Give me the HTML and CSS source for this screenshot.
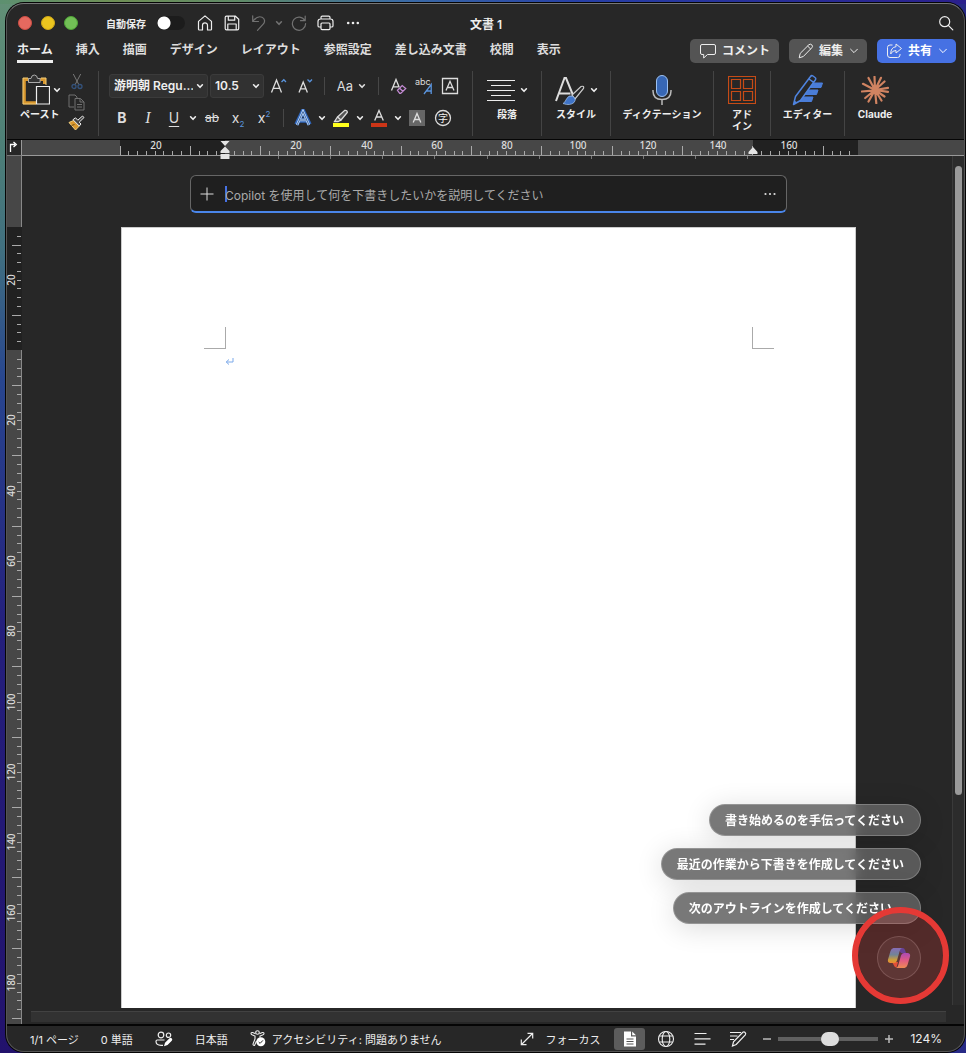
FILE: index.html
```html
<!DOCTYPE html>
<html lang="ja">
<head>
<meta charset="utf-8">
<meta name="viewport" content="width=device-width, initial-scale=1">
<title>文書 1</title>
<link rel="stylesheet" href="styles.css">
</head>
<body>
<svg class="defs" aria-hidden="true">
  <symbol id="chev" viewBox="0 0 8 8"><path d="M1.6 2.8 4 5.3 6.4 2.8" fill="none" stroke="currentColor" stroke-width="1.6" stroke-linecap="round" stroke-linejoin="round"/></symbol>
  <symbol id="chev-thin" viewBox="0 0 8 8"><path d="M.6 2.2 4 5.6 7.4 2.2" fill="none" stroke="currentColor" stroke-linecap="round" stroke-linejoin="round"/></symbol>
</svg>
<div class="window">
  <header class="titlebar">
    <div class="title-left">
      <div class="lights">
        <button class="light red" aria-label="閉じる"></button>
        <button class="light yellow" aria-label="しまう"></button>
        <button class="light green" aria-label="拡大"></button>
      </div>
      <label class="autosave">自動保存<input type="checkbox" class="switch"></label>
      <div class="quick">
        <button class="qa" aria-label="ホーム"><svg width="16" height="16" viewBox="0 0 16 16"><path d="M1.5 6.4 8 .9l6.500 5.500V14.200q0 .8-.8.8H10.500V10.300a2.500 2.500 0 0 0-5 0V15H2.300q-.8 0-.8-.8z"/></svg></button>
        <button class="qa" aria-label="保存"><svg width="16" height="16" viewBox="0 0 16 16"><path d="M2.500 1.200h9l3.200 3V13.500q0 1.300-1.300 1.300H2.500q-1.300 0-1.300-1.300V2.500q0-1.300 1.300-1.300zM4.300 1.200v4h6.400v-4M3.800 14.800V9h8.400v5.800"/></svg></button>
        <button class="qa dim" aria-label="元に戻す"><svg width="16" height="16" viewBox="0 0 16 16"><path d="M1.700.8V6.500H7.500M2 6.200C4.500 2.800 8 1 11 2.200c3 1.300 3.300 4.800 1.200 7L6.500 15.300"/></svg></button>
        <button class="qa-chev dim" aria-label="元に戻すの履歴"><svg width="8" height="8"><use href="#chev"/></svg></button>
        <button class="qa dim" aria-label="やり直し"><svg width="16" height="16" viewBox="0 0 16 16"><path d="M14.200 1v4.700H9.500M13.800 5.500A6.600 6.600 0 1 0 14.600 8.500"/></svg></button>
        <button class="qa" aria-label="印刷"><svg width="17" height="16" viewBox="0 0 17 16"><path d="M4 4V2.500Q4 1.200 5.300 1.200h6.400Q13 1.200 13 2.500V4M4 12H2.300Q1 12 1 10.700V6.500Q1 4 3.500 4h10Q16 4 16 6.500v4.200Q16 12 14.700 12H13M5 8h7q1 0 1 1v4.600q0 1-1 1H5q-1 0-1-1V9q0-1 1-1z"/></svg></button>
        <button class="qa" aria-label="その他"><svg width="16" height="16" viewBox="0 0 16 16"><g fill="currentColor" stroke="none"><circle cx="3.200" cy="8" r="1.300"/><circle cx="8" cy="8" r="1.300"/><circle cx="12.800" cy="8" r="1.300"/></g></svg></button>
      </div>
    </div>
    <h1 class="doc-title">文書 1</h1>
    <div class="title-right">
      <button class="qa" aria-label="検索"><svg width="16" height="16" viewBox="0 0 16 16"><circle cx="6.700" cy="6.700" r="5"/><path d="m10.300 10.300 4.500 4.500"/></svg></button>
    </div>
  </header>

  <div class="tabrow">
    <nav class="tabs">
      <a class="tab active" href="#home">ホーム</a>
      <a class="tab" href="#insert">挿入</a>
      <a class="tab" href="#draw">描画</a>
      <a class="tab" href="#design">デザイン</a>
      <a class="tab" href="#layout">レイアウト</a>
      <a class="tab" href="#references">参照設定</a>
      <a class="tab" href="#mailings">差し込み文書</a>
      <a class="tab" href="#review">校閲</a>
      <a class="tab" href="#view">表示</a>
    </nav>
    <div class="actions">
      <button class="action"><svg width="18" height="16" viewBox="0 0 18 16"><path d="M3 1.500h12q1.500 0 1.500 1.500v7q0 1.500-1.500 1.500H8.500L4.700 15v-3.500H3Q1.500 11.500 1.500 10V3Q1.500 1.500 3 1.500z"/></svg>コメント</button>
      <button class="action"><svg width="16" height="16" viewBox="0 0 16 16"><path d="m1.200 14.800 1-4.400 8.600-8.600q1.500-1.300 3 0 1.400 1.500 0 3L5.300 13.500zM9.600 3l3.200 3.200"/></svg>編集<svg class="drop" width="8" height="8"><use href="#chev-thin"/></svg></button>
      <button class="action primary"><svg width="17" height="16" viewBox="0 0 17 16"><path d="M6.500 2H4Q1.500 2 1.500 4.500V12Q1.500 14.500 4 14.500h7.500Q14 14.500 14 12V11M10 1l5.500 4.500L10 10V7.500Q6.500 7.300 4.700 11 4.700 4.300 10 3.700z"/></svg>共有<svg class="drop" width="8" height="8"><use href="#chev-thin"/></svg></button>
    </div>
  </div>

  <div class="ribbon">
    <section class="group clip">
      <button class="big">
        <span class="big-icon"><svg width="28" height="32" viewBox="0 0 28 32"><path d="M7 5.500H2.300V28.700H14M18 5.500h4.500V10" fill="none" stroke="#d9982f" stroke-width="3"/><path d="M1 4h5M1 4v26h13M24 4h-5M24 4v7" fill="none" stroke="#f3cd78"/><path d="M6.500 8.500v-4H9Q9.500 1 12.300 1T15.600 4.500h2.500v4z" fill="#333" stroke="#aaa"/><path d="M14.500 12.500h13v17.500h-13z" fill="#272727" stroke="#eee" stroke-width="1.200"/></svg><svg width="8" height="8"><use href="#chev"/></svg></span>
        <span>ペースト</span>
      </button>
      <div class="clip-tools">
        <button aria-label="切り取り"><svg width="12" height="17" viewBox="0 0 12 17"><path d="m2.300 1 5.500 10.500M9.700 1 4.200 11.500" fill="none" stroke="#777"/><g fill="none" stroke="#34527b" stroke-width="1.300"><circle cx="3" cy="13.500" r="2"/><circle cx="9" cy="13.500" r="2"/></g></svg></button>
        <button aria-label="コピー"><svg width="17" height="17" viewBox="0 0 17 17"><path d="M6 13H1V1h6l2 2v1M7 4.500h5.500L16 8v8H7zM12 4.500V8h4M9 10.500h5M9 13h5" fill="none" stroke="#717171"/></svg></button>
        <button aria-label="書式のコピー"><svg width="17" height="16" viewBox="0 0 17 16"><path d="M1 7.500 7.500 15l3.800-4L5.500 5.500z" fill="#d9982f" stroke="#f2cf7e"/><path d="m3.500 10.500 3-1" stroke="#725017"/><path d="m5 4.700 6.300 6.300 1.700-2-1.800-1.800L16 2.500 14.500 1 9.800 5.200 7.500 2.800z" fill="#444" stroke="#eee"/></svg></button>
      </div>
    </section>

    <section class="group font-group">
      <div class="row">
        <span class="pick name"><select aria-label="フォント"><option>游明朝 Regu...</option></select><svg width="8" height="8"><use href="#chev"/></svg></span>
        <span class="pick size"><select aria-label="フォント サイズ"><option>10.5</option></select><svg width="8" height="8"><use href="#chev"/></svg></span>
        <button class="tool" aria-label="フォントの拡大"><svg width="18" height="18" viewBox="0 0 18 18"><path d="M1.500 15.500 6.500 3l5 12.500M3.200 11.300h6.600"/><path class="blue" d="m11.500 5 2.300-2.300L16 5"/></svg></button>
        <button class="tool" aria-label="フォントの縮小"><svg width="18" height="18" viewBox="0 0 18 18"><path d="M3 15.500 7.200 5l4.200 10.500M4.500 11.800h5.400"/><path class="blue" d="m11.500 2.500 2.300 2.300L16 2.500"/></svg></button>
        <i class="rule"></i>
        <button class="tool case">Aa<svg width="8" height="8"><use href="#chev"/></svg></button>
        <i class="rule"></i>
        <button class="tool" aria-label="書式のクリア"><svg width="18" height="18" viewBox="0 0 18 18"><path d="M2.500 13.500 7 2.500l3.200 7.800M4 9.800h5.500"/><path d="m8.500 13.300 4.700-4.700 3.500 3-5 4.700h-1zM10.600 11.200l3.300 3" stroke="#c48bd4"/></svg></button>
        <button class="tool" aria-label="ルビ"><svg width="18" height="18" viewBox="0 0 18 18"><text x="0" y="8" class="ruby">abc</text><path class="blue" d="M9 17 16.200 7.500V17M11.200 14h5"/></svg></button>
        <button class="tool" aria-label="囲み線"><svg width="18" height="18" viewBox="0 0 18 18"><path d="M1.500 1.500h15v15h-15zM5 13.500 9 4.300l4 9.200M6.400 10.500h5.200"/></svg></button>
      </div>
      <div class="row">
        <button class="tool letter bold">B</button>
        <button class="tool letter italic">I</button>
        <button class="tool letter under">U</button>
        <button class="mini" aria-label="下線の種類"><svg width="8" height="8"><use href="#chev"/></svg></button>
        <button class="tool letter strike">ab</button>
        <button class="tool letter"><span>x<sub>2</sub></span></button>
        <button class="tool letter"><span>x<sup>2</sup></span></button>
        <i class="rule wide"></i>
        <button class="tool" aria-label="文字の効果"><svg width="18" height="18" viewBox="0 0 18 18"><path d="M2.500 15.500 9 2l6.500 13.500M5 11.500h8" stroke="#2f64b8" stroke-width="4.500"/><path d="M3 16 9 2.500l6 13.500M5.500 11h7" stroke="#bfdcff" stroke-width="2.400"/><path d="M3 16 9 2.500l6 13.500M5.500 11h7" stroke="#2b4d80" stroke-width=".8"/></svg></button>
        <button class="mini" aria-label="効果の一覧"><svg width="8" height="8"><use href="#chev"/></svg></button>
        <button class="tool" aria-label="蛍光ペン"><svg width="18" height="18" viewBox="0 0 18 18"><path d="m5.500 8 7-6.500q3-.5 2.800 2L9 11zM5.500 8 9 11l-3 1.500H2.500z" fill="#555"/><path d="M1 14h16v4H1z" fill="#ffff1c" stroke="none"/></svg></button>
        <button class="mini" aria-label="蛍光ペンの色"><svg width="8" height="8"><use href="#chev"/></svg></button>
        <button class="tool" aria-label="フォントの色"><svg width="18" height="18" viewBox="0 0 18 18"><path d="m4.700 11.500 4.300-10 4.300 10M6.300 8h5.400"/><path d="M1 14h16v4H1z" fill="#cc3517" stroke="none"/></svg></button>
        <button class="mini" aria-label="フォントの色の一覧"><svg width="8" height="8"><use href="#chev"/></svg></button>
        <button class="tool" aria-label="文字の網かけ"><svg width="18" height="18" viewBox="0 0 18 18"><path d="M1 1h16v16H1z" fill="#666" stroke="none"/><path d="M5.200 13.500 9 4.500l3.800 9M6.500 10.500h5"/></svg></button>
        <button class="tool" aria-label="囲い文字"><svg width="18" height="18" viewBox="0 0 18 18"><circle cx="9" cy="9" r="7.500"/><text x="4" y="13" class="enclosed">字</text></svg></button>
      </div>
    </section>

    <section class="group medium">
      <button class="big"><span class="big-icon"><svg width="28" height="28" viewBox="0 0 28 28"><path d="M0 4.500h28M4 9.500h20M0 14.500h28M4 19.500h20M0 24.500h28" fill="none" stroke="#ececec" stroke-width="1.200"/></svg><svg width="8" height="8"><use href="#chev"/></svg></span><span>段落</span></button>
    </section>
    <section class="group medium">
      <button class="big"><span class="big-icon"><svg width="30" height="30" viewBox="0 0 30 30"><path d="M1 26 9.500 3h1.500L18 20M4.500 18.500h11" fill="none" stroke="#ddd" stroke-width="2"/><path d="m17 20 9-8.500q3.500-1 2.500 2L20 24z" fill="#272727" stroke="#ccc" stroke-width="1.200"/><path d="M8 28.500q2-1 3.500-4.500 2-4.300 6-2.800 4.500 2.500 1.500 6.300-4 3.500-11 1z" fill="#3f74c8" stroke="#a9c7ee" stroke-width=".7"/></svg><svg width="8" height="8"><use href="#chev"/></svg></span><span>スタイル</span></button>
    </section>
    <section class="group large">
      <button class="big"><span class="big-icon"><svg width="20" height="32" viewBox="0 0 20 32"><rect x="4.500" y="1.500" width="11" height="21" rx="5.500" fill="#3767b5" stroke="#9cc1f2"/><path d="M1 16v1q0 8.500 9 8.500t9-8.500v-1M10 25.500V31" fill="none" stroke="#bbb" stroke-width="1.500"/></svg></span><span>ディクテーション</span></button>
    </section>
    <section class="group small">
      <button class="big"><span class="big-icon"><svg width="28" height="28" viewBox="0 0 28 28"><path d="M.5.500h27v27H.5zM3.500 3.500h9v9h-9zM15.500 3.500h9v9h-9zM3.500 15.500h9v9h-9zM15.500 15.500h9v9h-9z" fill="none" stroke="#c64b16" stroke-width="1.200"/></svg></span><span>アド<br>イン</span></button>
    </section>
    <section class="group editor">
      <button class="big"><span class="big-icon"><svg width="32" height="32" viewBox="0 0 32 32"><path d="M20 9h10.500l-1.500 4.500H16zM15.500 16H26l-1.500 4.500H11.500zM10.500 23H21l-1.500 4.500H6z" fill="#4a7dd8" stroke="#4a7dd8" stroke-linejoin="round"/><path d="m1.500 30.500 2-8L18.500 2.500q1-1.500 2.500-.5l2 1.500q1.300 1 .3 2.500L8.500 26.500zM17 5l4.300 3.200" fill="#272727" stroke="#4f84df" stroke-width="1.500" stroke-linejoin="round"/><path d="m1.500 30.500 1-4 2.700 2z" fill="#4f84df"/></svg></span><span>エディター</span></button>
    </section>
    <section class="group claude">
      <button class="big"><span class="big-icon"><svg width="28" height="28" viewBox="0 0 28 28"><path d="M14 14 13.500.8M14 14 20 1.800M14 14l9.500-8.500M14 14l13-2.200M14 14l13 1.800M14 14l9.500 6.500M14 14l6.500 10.500M14 14l1.300 13.200M14 14 7.500 25.500M14 14l-9.800 8M14 14.300.8 15.500M14 14 2 7.800M14 14 7.500 2" fill="none" stroke="#d08361" stroke-width="2.200" stroke-linecap="round"/></svg></span><span>Claude</span></button>
    </section>
  </div>

  <div class="hruler">
    <div class="corner"><svg width="12" height="14" viewBox="0 0 12 14"><path d="M3.500 12V4.500H8M6.500 2 9.300 4.500 6.500 7" fill="none" stroke="#fff" stroke-width="1.300"/></svg></div>
    <div class="hruler-track"><svg id="ruler-x" width="737" height="20"></svg></div>
  </div>

  <main class="workspace">
    <div class="vruler"><svg id="ruler-y" width="15" height="868"></svg></div>
    <div class="canvas">
      <div class="prompt">
        <button aria-label="追加"><svg width="14" height="14" viewBox="0 0 14 14"><path d="M7 .5v13M.5 7h13" stroke="#ddd" fill="none"/></svg></button>
        <input type="text" class="prompt-text" aria-label="Copilot" placeholder="Copilot を使用して何を下書きしたいかを説明してください">
        <button aria-label="その他のオプション"><svg width="12" height="4" viewBox="0 0 12 4"><g fill="#ddd"><circle cx="1.500" cy="2" r="1.100"/><circle cx="6" cy="2" r="1.100"/><circle cx="10.500" cy="2" r="1.100"/></g></svg></button>
      </div>
      <article class="page">
        <div class="marks"><i class="mark left"></i><i class="mark right"></i></div>
        <svg class="pilcrow" width="9" height="9" viewBox="0 0 9 9"><path d="M8 1v4H1.500M4 2.500 1.200 5 4 7.500" fill="none" stroke="#7ba9ea"/></svg>
      </article>
      <div class="hscroll"></div>
    </div>
    <div class="vscroll"><div class="thumb"></div></div>

    <div class="copilot">
      <button class="chip">書き始めるのを手伝ってください</button>
      <button class="chip">最近の作業から下書きを作成してください</button>
      <button class="chip roomy">次のアウトラインを作成してください</button>
      <button class="orb" aria-label="Copilot"><svg width="24" height="22" viewBox="0 0 24 22">
        <defs>
          <linearGradient id="ga" x1="0" y1="0" x2="0" y2="1"><stop offset="0" stop-color="#6c7fe0"/><stop offset=".45" stop-color="#4f9bb4"/><stop offset=".8" stop-color="#c9bd38"/><stop offset="1" stop-color="#f0a030"/></linearGradient>
          <linearGradient id="gb" x1="0" y1="0" x2="0" y2="1"><stop offset="0" stop-color="#9a50dc"/><stop offset=".5" stop-color="#e0669a"/><stop offset="1" stop-color="#f0a45c"/></linearGradient>
        </defs>
        <path d="M10.500 1H16q1.600.3 2.200 2.500L19 6h-5z" fill="#4245b4"/>
        <path d="M5 15h6l-1.500 5.500Q7.500 20.300 7 18.500z" fill="#e2583a"/>
        <path d="M6.500 1H15q-1.700.7-2.300 3L10 13.500Q9.300 16 7 16H3Q.3 15.500 1 12.500L3.500 4Q4.300 1.300 6.500 1z" fill="url(#ga)"/>
        <path d="M17.500 21H9q1.700-.7 2.300-3L14 8.500Q14.700 6 17 6h4q2.700.5 2 3.500L20.500 18q-.8 2.700-3 3z" fill="url(#gb)"/>
      </svg></button>
    </div>
    <div class="highlight"></div>
  </main>

  <footer class="status">
    <div class="status-left">
      <button class="st">1/1 ページ</button>
      <button class="st">0 単語</button>
      <button class="st" aria-label="共同編集"><svg width="18" height="16" viewBox="0 0 18 16"><g fill="none" stroke="#eee" stroke-width="1.200"><circle cx="6" cy="4" r="2.800"/><circle cx="13.500" cy="4.200" r="2.200"/><path d="M9.500 9H2.300Q1 9 1 10.500 1.200 14.300 6 14.300h2"/></g><path d="m9 15.200 1-3.500 4.500-4.500q1.300-.8 2.300.2t0 2.400L12.500 14z" fill="#fff"/></svg></button>
      <button class="st">日本語</button>
      <button class="st a11y"><svg width="16" height="17" viewBox="0 0 16 17"><g fill="none" stroke="#eee" stroke-width="1.100"><circle cx="7.500" cy="2.500" r="1.800"/><path d="M5.500 3.800 2.700 2.500Q1 2.300 1 3.500q0 .7 1 1.200L5 6v3L3 14q0 1.700 1.500 1.500L6.500 11M9.500 3.800l2.800-1.300q1.700-.2 1.700 1 0 .7-1 1.200L10 6v1.500"/></g><circle cx="10.800" cy="11.800" r="4.500" fill="#fff"/><path d="m8.700 12 1.400 1.400 2.800-3" fill="none" stroke="#272727"/></svg>アクセシビリティ: 問題ありません</button>
    </div>
    <div class="status-right">
      <button class="st focus"><svg width="14" height="14" viewBox="0 0 14 14"><path d="M1.500 12.500l11-11M7.500 1.300h5.200v5.200M1.300 7.500v5.200h5.200" fill="none" stroke="#eee" stroke-width="1.200"/></svg>フォーカス</button>
      <button class="view on" aria-label="印刷レイアウト"><svg width="14" height="16" viewBox="0 0 14 16"><path d="M1 .5h7v5h5V15.500H1zM9.200.5 13 4.300H9.200z" fill="#fff"/><path d="M3.500 8h7M3.500 10.500h7M3.500 13h7" stroke="#555"/></svg></button>
      <button class="view" aria-label="Web レイアウト"><svg width="18" height="18" viewBox="0 0 18 18"><g fill="none" stroke="#eee" stroke-width="1.100"><circle cx="9" cy="9" r="7.500"/><ellipse cx="9" cy="9" rx="3.800" ry="7.500"/><path d="M2.300 6h13.400M2.300 12h13.400"/></g></svg></button>
      <button class="view" aria-label="アウトライン"><svg width="17" height="14" viewBox="0 0 17 14"><path d="M.5 1.500h12M.5 6.800h16M.5 12.200h11" stroke="#eee" stroke-width="1.200"/></svg></button>
      <button class="view" aria-label="下書き"><svg width="18" height="18" viewBox="0 0 18 18"><path d="M1 2.500h11M1 6h7.500M1 9.500h4M3.500 16l1-4.200L13.800 2.300q1.200-.8 2.300.2t.2 2.300L7.200 14.500z" fill="none" stroke="#eee" stroke-width="1.200"/></svg></button>
      <button class="step" aria-label="縮小"><svg width="10" height="10" viewBox="0 0 10 10"><path d="M1 5h8" stroke="#bbb" stroke-width="1.500"/></svg></button>
      <input class="zoom" type="range" min="0" max="100" value="52" aria-label="ズーム">
      <button class="step" aria-label="拡大"><svg width="10" height="10" viewBox="0 0 10 10"><path d="M1 5h8M5 1v8" stroke="#bbb" stroke-width="1.500"/></svg></button>
      <span class="percent">124%</span>
    </div>
  </footer>
</div>
<script src="ruler.js"></script>
</body>
</html>
```
FILE: styles.css
```css
* { box-sizing: border-box; }
html { height: 100%; }
body {
  margin: 0;
  min-height: 100vh;
  display: flex;
  padding: 3px 1px 1px 6px;
  font-family: Inter, "Noto Sans CJK JP", sans-serif;
  font-size: 12px;
  color: #eee;
  background:
    linear-gradient(90deg, #5d9070 0, #6f8f55 12%, #5f8a68 25%, #3a6aa5 42%, #263fa6 60%, #2a1f8c 100%) top / 100% 4px no-repeat,
    linear-gradient(90deg, transparent 50%, #272a86 50%),
    linear-gradient(180deg, #639076 0, #4d7f77 14%, #406f80 24%, #28468f 36%, #241f7c 60%, #22126c 100%);
}
button, input, select { font: inherit; color: inherit; }
button { background: none; border: 0; padding: 0; display: flex; align-items: center; justify-content: center; }
svg { display: block; flex: none; }
.defs { position: absolute; width: 0; height: 0; }

.window {
  flex: 1;
  min-width: 0;
  display: flex;
  flex-direction: column;
  background: #272727;
  border: 1px solid #555;
  border-top-color: #777;
  border-radius: 18px;
  box-shadow: 0 0 0 1px #050505;
}

.titlebar {
  height: 35px;
  padding: 3px 10px 0 11px;
  display: grid;
  grid-template-columns: 1fr auto 1fr;
  align-items: center;
}
.title-left { display: flex; align-items: center; }
.lights { display: flex; gap: 9px; }
.light { width: 14px; height: 14px; border-radius: 50%; }
.red { background: #e5695f; border: 1px solid #cf4f45; }
.yellow { background: #ebc51f; border: 1px solid #d0a818; }
.green { background: #72c056; border: 1px solid #4fa436; }
.autosave { margin-left: 28px; display: flex; align-items: center; gap: 11px; font-size: 10px; font-weight: 600; }
.switch {
  appearance: none;
  margin: 0;
  width: 28px;
  height: 14px;
  border-radius: 7px;
  background: radial-gradient(circle at 7px 7px, #fff 6px, transparent 7px), #1c1c1c;
}
.quick { display: flex; align-items: center; margin-left: 6px; }
.qa { width: 27px; height: 24px; }
.qa-chev { width: 13px; }
.qa svg { fill: none; stroke: currentColor; stroke-width: 1.2; stroke-linejoin: round; stroke-linecap: round; }
.dim { color: #727272; }
.doc-title { margin: 0; font-size: 12px; font-weight: 600; }
.title-right { display: flex; justify-content: flex-end; margin-right: -5px; }

.tabrow { height: 27px; display: flex; justify-content: space-between; align-items: flex-start; padding: 0 8px 0 10px; }
.tabs { display: flex; gap: 23px; }
.tab { color: #ddd; text-decoration: none; font-weight: 700; line-height: 22px; height: 24px; white-space: nowrap; }
.tab.active { color: #eee; border-bottom: 3px solid #eee; }
.actions { display: flex; gap: 10px; }
.action { height: 24px; padding: 0 9px; gap: 5px; border-radius: 5px; background: #545454; font-weight: 600; line-height: 22px; white-space: nowrap; }
.action svg { fill: none; stroke: #eee; stroke-linejoin: round; }
.action .drop { margin-left: 2px; }
.primary { background: #4671e3; color: #fff; }

.ribbon { height: 73px; display: flex; padding: 5px 0 0; }
.group { position: relative; display: flex; border-right: 1px solid #444; height: 65px; }
.group:last-child { border-right: 0; }
.big { flex-direction: column; justify-content: flex-start; font-size: 10px; line-height: 12px; font-weight: 700; white-space: nowrap; width: 100%; }
.big-icon { height: 37px; display: flex; align-items: center; gap: 5px; }
.clip { width: 92px; padding-left: 13px; }
.clip .big { width: 42px; align-items: flex-start; }
.clip .big-icon { padding-left: 2px; gap: 3px; }
.clip-tools { display: flex; flex-direction: column; align-items: center; gap: 4px; margin: 2px 0 0 6px; }
.font-group { width: 374px; padding: 2px 0 0 10px; flex-direction: column; gap: 7px; }
.row { display: flex; align-items: center; height: 25px; }
.medium { width: 69px; }
.large { width: 103px; }
.small { width: 57px; }
.editor { width: 74px; }
.claude { width: 60px; }
.claude .big { font-size: 10px; font-weight: 700; }

.pick { position: relative; display: flex; height: 24px; margin-right: 2px; }
.pick select {
  appearance: none;
  width: 100%;
  height: 24px;
  padding: 0 14px 0 4px;
  border: 1px solid #3b3b3b;
  border-radius: 3px;
  background: #313131;
  font-weight: 600;
}
.pick svg { position: absolute; right: 4px; top: 8px; pointer-events: none; }
.name { width: 99px; }
.size { width: 54px; }
.tool { width: 26px; height: 24px; color: #ddd; flex: none; }
.tool svg { fill: none; stroke: #ddd; stroke-width: 1.3; }
.tool .blue { stroke: #5a94dd; }
.mini { width: 12px; height: 24px; }
.rule { width: 1px; height: 18px; margin: 0 6px; background: #474747; }
.rule.wide { margin: 0 6px; }
.case { width: 41px; gap: 5px; font-size: 13px; }
.case svg { stroke: none; }
.ruby { font-size: 9px; fill: #ddd; stroke: none; }
.enclosed { font-size: 10px; fill: #eee; stroke: none; }
.letter { font-size: 14px; line-height: 24px; }
.bold { font-weight: 700; }
.italic { font-family: "Liberation Serif", serif; font-style: italic; font-size: 16px; }
.under { text-decoration: underline; text-underline-offset: 3px; }
.strike { font-size: 12px; text-decoration: line-through; }
.letter sub, .letter sup { font-size: 8px; line-height: 8px; color: #5a94dd; }

.hruler { display: flex; height: 17px; border-top: 1px solid #050505; background: #474747; position: relative; z-index: 1; }
.corner { width: 15px; border-right: 1px solid #999; border-bottom: 1px solid #777; background: #272727; }
.hruler-track { flex: 1; min-width: 0; display: flex; justify-content: center; padding: 0 12px 0 2px; border-bottom: 1px solid #999; height: 16px; }
.hruler svg, .vruler svg { overflow: visible; }
.ruler-label { font: 500 10px "Noto Sans", sans-serif; fill: #ddd; text-anchor: middle; }

.workspace { flex: 1; display: flex; position: relative; min-height: 0; }
.vruler { width: 15px; background: #474747; border-right: 1px solid #888; }
.vruler svg { height: 100%; }
.canvas { flex: 1; min-width: 0; display: flex; flex-direction: column; align-items: center; padding: 19px 0 3px 3px; }
.prompt {
  width: 100%;
  max-width: 597px;
  height: 38px;
  display: flex;
  align-items: center;
  padding: 0 10px 0 9px;
  background: #1f1f1f;
  border: 1px solid #666;
  border-bottom: 2px solid #4a86ea;
  border-radius: 6px;
}
.prompt-text { flex: 1; min-width: 0; height: 24px; margin: 4px 0 0 11px; padding: 0; border: 0; outline: 0; background: linear-gradient(#4671e3, #4671e3) 0 2px / 2px 16px no-repeat; }
.prompt-text::placeholder { color: #aaa; opacity: 1; }
.page { flex: 1; width: 100%; max-width: 735px; margin-top: 14px; padding: 99px 81px 0 82px; background: #fff; border: 1px solid #ccc; border-bottom: 0; }
.marks { display: flex; justify-content: space-between; }
.mark { width: 22px; height: 22px; border-bottom: 1px solid #aaa; }
.mark.left { border-right: 1px solid #aaa; }
.mark.right { border-left: 1px solid #aaa; }
.pilcrow { margin: 8px 0 0 21px; }
.hscroll { align-self: stretch; height: 11px; margin: 3px 6px 0; background: #323232; border-top: 1px solid #424242; }
.canvas { padding-bottom: 2px; }
.vscroll { width: 12px; padding: 10px 2px 0; margin-bottom: 19px; background: #2c2c2c; border-left: 1px solid #3a3a3a; }
.thumb { height: 75%; border-radius: 4px; background: #9a9a9a; }

.copilot { position: absolute; right: 43px; bottom: 44px; display: flex; flex-direction: column; align-items: flex-end; gap: 12px; }
.chip {
  height: 32px;
  padding: 0 16px 1px 15px;
  border: 1px solid rgba(255, 255, 255, .22);
  border-radius: 16px;
  background: rgba(98, 98, 98, .86);
  backdrop-filter: blur(6px);
  box-shadow: 0 4px 28px rgba(0, 0, 0, .14);
  color: #fff;
  font-weight: 600;
}
.roomy { padding-right: 28px; }
.orb { width: 44px; height: 44px; border: 1px solid rgba(255, 255, 255, .2); border-radius: 50%; background: #363636; }
.highlight { position: absolute; right: 15px; bottom: 20px; width: 97px; height: 97px; border: 6px solid #e53935; border-radius: 50%; background: rgba(229, 57, 53, .23); background-clip: padding-box; pointer-events: none; }

.status { height: 27px; border-top: 2px solid #050505; display: flex; justify-content: space-between; align-items: center; padding: 0 22px 0 23px; font-size: 11px; }
.status-left, .status-right { display: flex; align-items: center; }
.status-left { gap: 22px; }
.st { gap: 6px; white-space: nowrap; }
.focus { gap: 11px; margin-right: 14px; }
.view { width: 36px; height: 22px; }
.view.on { width: 31px; margin-right: 3px; border-radius: 3px; background: #5c5c5c; }
.step { width: 22px; height: 22px; }
.zoom { appearance: none; width: 100px; height: 14px; margin: 0; background: linear-gradient(#606060, #606060) center / 100% 4px no-repeat; }
.zoom::-webkit-slider-thumb { appearance: none; width: 18px; height: 14px; border-radius: 7px; background: #ddd; }
.percent { font-size: 12px; margin-left: 10px; }
```
FILE: ruler.js
```js
const NS = "http://www.w3.org/2000/svg";
const STEP = 8.79; // distance between minor ticks; eight make one labelled interval

function add(svg, name, attrs, text) {
  const el = document.createElementNS(NS, name);
  for (const key in attrs) el.setAttribute(key, attrs[key]);
  if (text !== undefined) el.textContent = text;
  svg.appendChild(el);
}

function bar(svg, vertical, along, across, length, thick, fill) {
  add(svg, "rect", vertical
    ? { x: across, y: along, width: thick, height: length, fill }
    : { x: along, y: across, width: length, height: thick, fill });
}

function ticks(svg, vertical, zero, first, last, end) {
  for (let n = Math.ceil((first - zero) / STEP); zero + n * STEP < last; n++) {
    if (n === 0) continue;
    const at = Math.round(zero + n * STEP);
    const size = Math.abs(n % 8) === 4 ? 9 : 4;
    if (vertical) bar(svg, true, at, end - size, 1, size, "#aaa");
    else bar(svg, false, at, end - size, 1, size, "#aaa");
    if (n % 8 === 0) {
      const label = Math.abs(n / 8) * 20;
      add(svg, "text", vertical
        ? { class: "ruler-label", transform: `translate(8 ${at}) rotate(-90)` }
        : { class: "ruler-label", x: at + 1, y: 9 }, label);
    }
  }
}

// A horizontal bar in a vertical ruler is one pixel high and `size` wide.
const rx = document.getElementById("ruler-x");
bar(rx, false, 0, 0, 105, 15, "#212121");
bar(rx, false, 633, 0, 105, 15, "#212121");
bar(rx, false, 0, 6, 1, 9, "#aaa");
ticks(rx, false, 105, 3, 732, 15);
for (let n = 1; n <= 10; n++) bar(rx, false, Math.round(106 + n * 52.1), 16, 1, 3, "#777");
add(rx, "path", { d: "M100.500 1h9L105 6zM105 6.500l4.500 4.500v2h-9v-2zM100.500 14h9v5h-9zM628.500 14v-2l4.500-5 4.500 5v2z", fill: "#e4e4e4" });

const ry = document.getElementById("ruler-y");
bar(ry, true, 71, 0, 123, 15, "#212121");
ticks(ry, true, 194, 71, 868, 14);
```
